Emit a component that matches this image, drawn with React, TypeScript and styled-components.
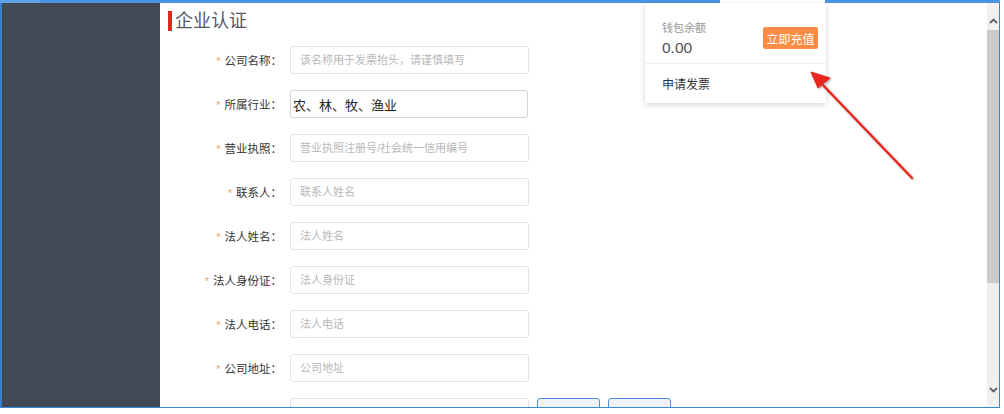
import React from "react";
import styled, { createGlobalStyle } from "styled-components";

const GlobalStyle = createGlobalStyle`
  html, body {
    margin: 0;
    padding: 0;
    background: #fff;
  }
  body {
    font-family: "Liberation Sans", "Noto Sans CJK SC", sans-serif;
  }
`;

type Field = {
  label: string;
  placeholder?: string;
  value?: string;
  narrow?: boolean;
};

const fields: Field[] = [
  { label: "公司名称：", placeholder: "该名称用于发票抬头，请谨慎填写" },
  { label: "所属行业：", value: "农、林、牧、渔业", narrow: true },
  { label: "营业执照：", placeholder: "营业执照注册号/社会统一信用编号" },
  { label: "联系人：", placeholder: "联系人姓名" },
  { label: "法人姓名：", placeholder: "法人姓名" },
  { label: "法人身份证：", placeholder: "法人身份证" },
  { label: "法人电话：", placeholder: "法人电话" },
  { label: "公司地址：", placeholder: "公司地址" },
];

const Page = styled.div`
  position: relative;
  width: 1004px;
  height: 414px;
  overflow: hidden;
`;

const TopBar = styled.div`
  display: flex;
  width: 1000px;
  height: 3px;
`;

const BarSegment = styled.div<{ $w?: number; $color: string }>`
  flex: ${(p) => (p.$w ? `0 0 ${p.$w}px` : "1")};
  background: ${(p) => p.$color};
`;

const Window = styled.div`
  display: flex;
  width: 1000px;
  height: 405px;
  box-sizing: border-box;
  border-left: 2px solid #3c80c8;
  border-right: 1px solid #3c86d2;
  border-bottom: 1px solid #3a88d8;
`;

const Sidebar = styled.div`
  flex: 0 0 158px;
  background: #434a56;
`;

const Main = styled.div`
  flex: 1;
  background: #fff;
  overflow: hidden;
`;

const Title = styled.h2`
  margin: 8px 0 0 8px;
  height: 20px;
  border-left: 4px solid #e4261c;
  padding-left: 3px;
  font-size: 18px;
  line-height: 20px;
  font-weight: normal;
  color: #585863;
`;

const Form = styled.div`
  margin-top: 15px;
  display: flex;
  flex-direction: column;
  gap: 16px;
`;

const Row = styled.div`
  display: flex;
  align-items: center;
  height: 28px;
`;

const Label = styled.label`
  flex: 0 0 122px;
  margin-right: 8px;
  text-align: right;
  font-size: 11.5px;
  color: #333;
  white-space: nowrap;
`;

const Star = styled.span`
  color: #f3a468;
  font-size: 11px;
  margin-right: 4px;
`;

const TextInput = styled.input<{ $filled?: boolean; $narrow?: boolean }>`
  width: ${(p) => (p.$narrow ? 238 : 239)}px;
  height: 28px;
  box-sizing: border-box;
  border: 1px solid ${(p) => (p.$filled ? "#d6d6d6" : "#e2e2e2")};
  border-radius: 3px;
  padding: 0 0 0 ${(p) => (p.$filled ? 2 : 9)}px;
  font-family: "Liberation Sans", "Noto Sans CJK SC", sans-serif;
  font-size: ${(p) => (p.$filled ? 13 : 11)}px;
  color: #222;
  outline: none;
  background: #fff;

  &::placeholder {
    color: #b8b8b8;
  }
`;

const SideButton = styled.button`
  width: 63px;
  height: 28px;
  margin-left: 8px;
  border: 1px solid #4a90e2;
  border-radius: 3px;
  background: #f1f2f4;
`;

const Scrollbar = styled.div`
  flex: 0 0 12px;
  display: flex;
  flex-direction: column;
  padding: 8px 0;
  background: #f0f0f0;
`;

const ScrollButton = styled.div<{ $h: number }>`
  height: ${(p) => p.$h}px;
  display: flex;
  align-items: center;
  justify-content: center;
`;

const Thumb = styled.div`
  height: 253px;
  background: #cbcbcb;
`;

const Track = styled.div`
  flex: 1;
  background: #eeeeee;
`;

const WalletCard = styled.div`
  position: absolute;
  left: 645px;
  top: 3px;
  width: 181px;
  background: #fff;
  box-shadow: 0 2px 6px rgba(0, 0, 0, 0.16);
  font-family: "Liberation Sans", "Noto Sans CJK SC", sans-serif;
`;

const WalletTop = styled.div`
  height: 61px;
  box-sizing: border-box;
  display: flex;
  justify-content: space-between;
  align-items: flex-start;
  padding: 17px 8px 0 17px;
  border-bottom: 1px solid #eeeeee;
`;

const WalletLabel = styled.div`
  font-size: 11px;
  line-height: 16px;
  color: #999;
`;

const WalletAmount = styled.div`
  margin-top: 2px;
  font-size: 15.5px;
  line-height: 20px;
  color: #4f4f55;
`;

const RechargeButton = styled.button`
  margin-top: 7px;
  width: 55px;
  height: 22px;
  padding: 0;
  border: none;
  border-radius: 2px;
  background: #ff8c44;
  color: #fff;
  font-family: inherit;
  font-size: 12px;
`;

const WalletLink = styled.div`
  height: 39px;
  display: flex;
  align-items: center;
  padding-left: 17px;
  font-size: 12px;
  color: #333;
`;

const Annotation = styled.svg`
  position: absolute;
  left: 800px;
  top: 60px;
  pointer-events: none;
`;

const Chevron = ({ up }: { up?: boolean }) => (
  <svg width="9" height="6" viewBox="0 0 9 6">
    <polyline
      points={up ? "1,5 4.5,1.5 8,5" : "1,1 4.5,4.5 8,1"}
      fill="none"
      stroke="#5b5f6e"
      strokeWidth="1.8"
    />
  </svg>
);

export default function App() {
  return (
    <>
      <GlobalStyle />
      <Page>
        <TopBar>
          <BarSegment $w={40} $color="#5ea3ea" />
          <BarSegment $w={680} $color="#4a93e4" />
          <BarSegment $w={105} $color="#ffffff" />
          <BarSegment $color="#4a93e4" />
        </TopBar>
        <Window>
          <Sidebar />
          <Main>
            <Title>企业认证</Title>
            <Form>
              {fields.map((f) => (
                <Row key={f.label}>
                  <Label>
                    <Star>*</Star>
                    {f.label}
                  </Label>
                  {f.value ? (
                    <TextInput $filled $narrow={f.narrow} defaultValue={f.value} readOnly />
                  ) : (
                    <TextInput placeholder={f.placeholder} />
                  )}
                </Row>
              ))}
              <Row>
                <Label>
                  <Star>*</Star>
                  执照扫描件：
                </Label>
                <TextInput />
                <SideButton />
                <SideButton />
              </Row>
            </Form>
          </Main>
          <Scrollbar>
            <ScrollButton $h={19}>
              <Chevron up />
            </ScrollButton>
            <Thumb />
            <Track />
            <ScrollButton $h={18}>
              <Chevron />
            </ScrollButton>
          </Scrollbar>
        </Window>

        <WalletCard>
          <WalletTop>
            <div>
              <WalletLabel>钱包余额</WalletLabel>
              <WalletAmount>0.00</WalletAmount>
            </div>
            <RechargeButton>立即充值</RechargeButton>
          </WalletTop>
          <WalletLink>申请发票</WalletLink>
        </WalletCard>

        <Annotation width="125" height="130" viewBox="0 0 125 130">
          <defs>
            <filter id="shade" x="-20%" y="-20%" width="140%" height="140%">
              <feDropShadow dx="1" dy="1" stdDeviation="1" floodColor="#000" floodOpacity="0.35" />
            </filter>
          </defs>
          <g filter="url(#shade)" fill="#e8261c" stroke="#e8261c">
            <line x1="112" y1="118" x2="20" y2="22" strokeWidth="2.4" strokeLinecap="round" />
            <polygon points="11,12 30,18 18,28" strokeWidth="1" strokeLinejoin="round" />
          </g>
        </Annotation>
      </Page>
    </>
  );
}
